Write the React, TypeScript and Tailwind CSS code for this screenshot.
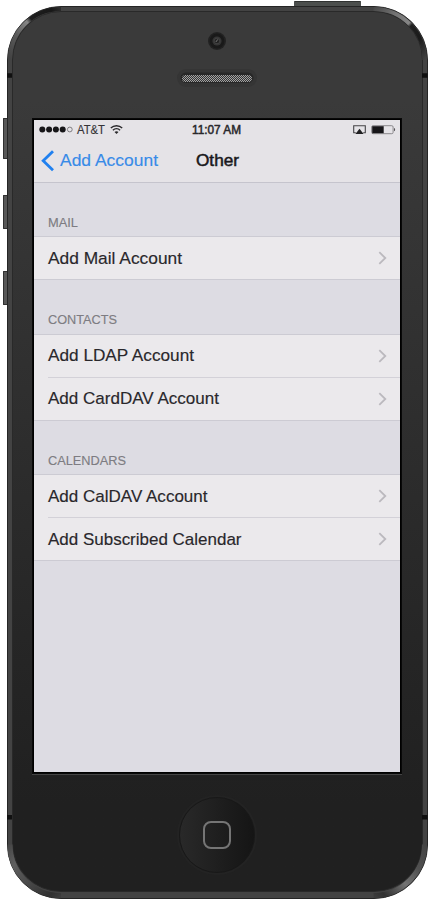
import React from 'react';

const groups = [
  { title: 'MAIL', items: ['Add Mail Account'], head: 'h-[53px] pb-[5px]', textTop: 'pt-[11px]', iconTop: 'mt-[14px]' },
  { title: 'CONTACTS', items: ['Add LDAP Account', 'Add CardDAV Account'], head: 'h-[54px] pb-[6px]', textTop: 'pt-[10px]', iconTop: 'mt-[13.5px]' },
  { title: 'CALENDARS', items: ['Add CalDAV Account', 'Add Subscribed Calendar'], head: 'h-[53px] pb-[5px]', textTop: 'pt-[11px]', iconTop: 'mt-[14px]' },
];

const labelWidths: Record<string, string> = {
  MAIL: '30',
  CONTACTS: '69',
  CALENDARS: '78',
  'Add Mail Account': '134',
  'Add LDAP Account': '146',
  'Add CardDAV Account': '171',
  'Add CalDAV Account': '159.5',
  'Add Subscribed Calendar': '193.5',
};

function Label({ text, size, width, color, bold = false }: { text: string; size: number; width: string; color: string; bold?: boolean }) {
  return (
    <svg className="block overflow-visible" width={width} height="20" role="img" aria-label={text}>
      <text x="0" y="16" textLength={width} lengthAdjust="spacingAndGlyphs" fontSize={size} fill={color} stroke={color} strokeWidth={bold ? 0.5 : 0.15} fontFamily="'Liberation Sans', Arial, sans-serif">
        {text}
      </text>
    </svg>
  );
}

function StatusBar() {
  return (
    <div className="flex h-[20px] items-start">
      <svg className="mt-[6px] ml-[5px] block" width="36" height="7">
        {[3.3, 10.1, 16.9, 23.7].map((x) => (
          <circle key={x} cx={x} cy="3.5" r="3" fill="#161518" />
        ))}
        <circle cx="30.8" cy="3.5" r="2.4" fill="none" stroke="#68666a" strokeWidth="0.8" />
      </svg>
      <div className="-mt-[2px] ml-[1.5px]">
        <Label text="AT&T" size={12} width="28" color="#353437" />
      </div>
      <svg className="mt-[4.5px] ml-[5px] block" width="13" height="10" viewBox="0 0 13 10" fill="none" stroke="#29282b" strokeWidth="1.35">
        <path d="M.8 3.1C4-.1 9-.1 12.2 3.1M2.9 5.2c2-1.9 5.2-1.9 7.2 0" />
        <path d="M6.5 9.1 4.5 7.1c1.2-1.1 2.8-1.1 4 0Z" fill="#29282b" stroke="none" />
      </svg>
      <div className="-mt-[2px] ml-[69.5px]">
        <Label text="11:07 AM" size={12} width="49" color="#29282b" bold />
      </div>
      <svg className="mt-[4.5px] ml-[112px] block" width="13" height="10" viewBox="0 0 13 10">
        <path d="M2.8 7.7H.7V.8h11.6v6.9h-2.1" fill="none" stroke="#454447" strokeWidth="1.1" />
        <path d="M6.5 3.8 10.6 9H2.4Z" fill="#202022" />
      </svg>
      <svg className="mt-[4.5px] ml-[5px] block" width="25" height="10" viewBox="0 0 25 10">
        <rect x=".7" y=".7" width="21.4" height="8" rx="1.3" fill="none" stroke="#8a888c" strokeWidth="1" />
        <path d="M1.2 1.2h11.5v7H1.2Z" fill="#161518" />
        <path d="M23 3.1c1.5.2 1.5 3 0 3.2Z" fill="#555357" />
      </svg>
    </div>
  );
}

function NavBar() {
  return (
    <div className="h-[63px] border-b border-[#c5c4cd] bg-[#e5e3e7]">
      <StatusBar />
      <div className="flex h-[42px] pt-[10px]">
        <svg className="ml-[7px] block" width="14" height="22" viewBox="0 0 14 22" fill="none">
          <path d="M12 1.2 2.2 10.7 12 20.2" stroke="#2080ef" strokeWidth="2.8" />
        </svg>
        <div className="ml-[4.5px]">
          <Label text="Add Account" size={17} width="98" color="#388be7" />
        </div>
        <div className="ml-[38px]">
          <Label text="Other" size={16.5} width="43" color="#19181b" bold />
        </div>
      </div>
    </div>
  );
}

function Screen() {
  return (
    <div className="h-[652px] w-[366px] overflow-hidden bg-[#dddce3]">
      <NavBar />
      {groups.map((g) => (
        <section key={g.title}>
          <div className={`${g.head} flex items-end pl-[14px]`}>
            <Label text={g.title} size={13} width={labelWidths[g.title]} color="#7d7c82" />
          </div>
          <div className="border-y border-[#cccbd3] bg-[#ebe9ec]">
            {g.items.map((item, i) => {
              const last = i === g.items.length - 1;
              return (
                <div key={item} className={`pl-[14px] ${last ? 'h-[42px]' : 'h-[43px]'}`}>
                  <div className={`flex h-full justify-between pr-[13px] ${last ? '' : 'border-b border-[#d3d1d8]'}`}>
                    <div className={g.textTop}>
                      <Label text={item} size={17} width={labelWidths[item]} color="#29272b" />
                    </div>
                    <svg className={`${g.iconTop} block`} width="9" height="14" viewBox="0 0 9 14" fill="none">
                      <path d="m1.3 1.2 6 5.8-6 5.8" stroke="#bbb9be" strokeWidth="1.8" />
                    </svg>
                  </div>
                </div>
              );
            })}
          </div>
        </section>
      ))}
    </div>
  );
}

function Rim() {
  return (
    <svg className="pointer-events-none absolute top-0 left-0" width="430" height="900" fill="none">
      <defs>
        <linearGradient id="tl" gradientUnits="userSpaceOnUse" x1="8" y1="56" x2="70" y2="8">
          <stop offset="0" stopColor="#434343" />
          <stop offset=".25" stopColor="#5a5a5a" />
          <stop offset=".46" stopColor="#868686" />
          <stop offset=".52" stopColor="#1f1f1f" />
          <stop offset=".8" stopColor="#181818" />
          <stop offset="1" stopColor="#434343" />
        </linearGradient>
        <linearGradient id="tr" gradientUnits="userSpaceOnUse" x1="370" y1="8" x2="426" y2="60">
          <stop offset="0" stopColor="#434343" />
          <stop offset=".3" stopColor="#747474" />
          <stop offset=".51" stopColor="#868686" />
          <stop offset=".55" stopColor="#202020" />
          <stop offset=".75" stopColor="#1a1a1a" />
          <stop offset="1" stopColor="#434343" />
        </linearGradient>
        <linearGradient id="bl" gradientUnits="userSpaceOnUse" x1="8" y1="842" x2="66" y2="896">
          <stop offset="0" stopColor="#434343" />
          <stop offset=".25" stopColor="#5f5f5f" />
          <stop offset=".6" stopColor="#444" />
          <stop offset=".85" stopColor="#303030" />
          <stop offset="1" stopColor="#434343" />
        </linearGradient>
        <linearGradient id="br" gradientUnits="userSpaceOnUse" x1="426" y1="842" x2="366" y2="896">
          <stop offset="0" stopColor="#434343" />
          <stop offset=".3" stopColor="#515151" />
          <stop offset=".54" stopColor="#747474" />
          <stop offset=".82" stopColor="#303030" />
          <stop offset="1" stopColor="#434343" />
        </linearGradient>
      </defs>
      <path d="M10 60A51 51 0 0 1 61 9" stroke="url(#tl)" strokeWidth="4" />
      <path d="M373.5 9A51 51 0 0 1 424.5 60" stroke="url(#tr)" strokeWidth="4" />
      <path d="M10 844.5A51 51 0 0 0 61 895.5" stroke="url(#bl)" strokeWidth="5" />
      <path d="M424.5 844.5A51 51 0 0 1 373.5 895.5" stroke="url(#br)" strokeWidth="5" />
      <path d="M7 75.5h5M422 75.5h5.5M7 817.3h5M422 817.3h5.5" stroke="#101010" strokeWidth="4.5" />
    </svg>
  );
}

function Camera() {
  return (
    <svg className="mx-auto block" width="22" height="22" viewBox="0 0 22 22">
      <circle cx="11" cy="11" r="9" fill="#222" />
      <circle cx="11" cy="11" r="7.4" fill="#191919" />
      <circle cx="11" cy="11" r="4.6" fill="#353535" />
      <circle cx="11" cy="11" r="2.8" fill="#222" stroke="#4b4b4b" strokeWidth=".7" />
      <path d="m9.8 12 2-2.6" stroke="#777" strokeWidth="1" />
    </svg>
  );
}

function Speaker() {
  return (
    <svg className="mx-auto block" width="82" height="20">
      <defs>
        <pattern id="mesh" width="2" height="2" patternUnits="userSpaceOnUse">
          <rect width="2" height="2" fill="#353535" />
          <rect width="1" height="1" fill="#a3a3a3" />
          <rect x="1" y="1" width="1" height="1" fill="#a3a3a3" />
        </pattern>
      </defs>
      <rect x="1" y="1" width="80" height="18" rx="9" fill="#353535" />
      <rect x="4.5" y="4.5" width="73" height="10.5" rx="5.2" fill="#282828" />
      <rect x="6" y="7" width="70" height="7" rx="3.5" fill="url(#mesh)" />
    </svg>
  );
}

function HomeButton() {
  return (
    <div className="mx-auto flex h-[76px] w-[76px] items-center justify-center rounded-full border border-[#181818] bg-linear-to-r from-[#292929] to-[#151515] shadow-[0_0_0_2px_#232323]">
      <div className="h-[28px] w-[28px] rounded-[8px] border-2 border-[#757575]" />
    </div>
  );
}

export default function App() {
  return (
    <main className="relative h-[900px] w-[430px] overflow-hidden bg-white">
      <div className="absolute top-[1px] left-[294px] h-[6px] w-[67px] rounded-t-[1px] border-t border-[#303231] bg-[#4c4f4d]" />
      <div className="absolute top-[118px] left-[3px] h-[41px] w-[6px] rounded-l-[1px] border-y border-l border-[#303030] bg-[#575757]" />
      <div className="absolute top-[195px] left-[3px] h-[34px] w-[6px] rounded-l-[1px] border-y border-l border-[#303030] bg-[#575757]" />
      <div className="absolute top-[271px] left-[3px] h-[34px] w-[6px] rounded-l-[1px] border-y border-l border-[#303030] bg-[#575757]" />
      <div className="relative pt-[6px] pl-[7px]">
        <div className="h-[893px] w-[420.5px] rounded-[54px] border border-[#252525] bg-[#434343] px-[4px] pt-[4px]">
          <div className="h-[881px] rounded-[49px] border border-[#292929] bg-linear-to-b from-[#3a3a3a] from-10% to-[#202020] to-90%">
            <div className="h-[106px] pt-[18px]">
              <Camera />
              <div className="h-[16px]" />
              <Speaker />
            </div>
            <div className="ml-[19px] h-[656px] w-[370px] border border-[#080808] bg-black pt-px pl-px shadow-[0_1px_0_#444]">
              <Screen />
            </div>
            <div className="pt-[23px]">
              <HomeButton />
            </div>
          </div>
        </div>
      </div>
      <Rim />
    </main>
  );
}
